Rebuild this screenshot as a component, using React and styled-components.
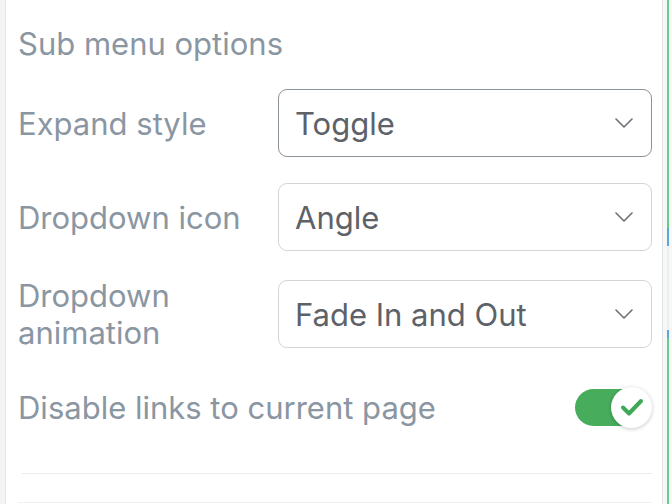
import React from "react";
import styled, { createGlobalStyle } from "styled-components";

const Global = createGlobalStyle`
  html, body { margin: 0; padding: 0; background: #ffffff; }
  body { font-family: Inter, "Noto Sans", sans-serif; }
  #root { width: 672px; height: 504px; overflow: hidden; }
`;

const Page = styled.div`
  display: flex;
  width: 672px;
  height: 504px;
  background: #fff;
`;

const LeftRail = styled.div`
  width: 5px;
  background: #f3f4f4;
  border-right: 1px solid #e6e7e8;
  flex: none;
`;

const RightRail = styled.div`
  width: 9px;
  flex: none;
  background: #f6f7f7;
  border-left: 1px solid #e3e4e5;
  display: flex;
  justify-content: flex-end;
`;

const Stripe = styled.div`
  width: 2px;
  margin-right: 3px;
  background: linear-gradient(
    to bottom,
    #6cc98a 0,
    #6cc98a 228px,
    #5aa7d8 228px,
    #5aa7d8 246px,
    #eceeef 246px,
    #eceeef 330px,
    #5aa7d8 330px,
    #5aa7d8 338px,
    #6cc98a 338px
  );
`;

const Panel = styled.div`
  flex: 1;
  padding: 25px 10px 0 12px;
  display: flex;
  flex-direction: column;
`;

const Heading = styled.div`
  font-size: 31px;
  line-height: 38px;
  color: #8a96a2;
  margin-bottom: 26px;
`;

const Row = styled.div`
  display: grid;
  grid-template-columns: 1fr 374px;
  align-items: center;
  margin-bottom: 26px;
`;

const Label = styled.div`
  font-size: 31px;
  line-height: 37px;
  color: #8a96a2;
  white-space: nowrap;
`;

const Select = styled.div`
  height: 68px;
  box-sizing: border-box;
  border: 1.5px solid ${(p) => (p.$focused ? "#8c9399" : "#d3d5d8")};
  border-radius: 9px;
  display: flex;
  align-items: center;
  justify-content: space-between;
  padding: 0 18px 0 16px;
  font-size: 31px;
  color: #5d6269;
  background: #fff;
`;

const SwitchRow = styled.div`
  display: flex;
  align-items: center;
  justify-content: space-between;
  margin-top: 8px;
  height: 44px;
`;

const Track = styled.div`
  position: relative;
  width: 66px;
  height: 37px;
  border-radius: 19px;
  background: #47ac5c;
  margin-right: 11px;
`;

const Knob = styled.div`
  position: absolute;
  right: -11px;
  top: -2px;
  width: 41px;
  height: 41px;
  border-radius: 50%;
  background: #fff;
  box-shadow: 0 1px 4px rgba(0, 0, 0, 0.22);
  display: flex;
  align-items: center;
  justify-content: center;
`;

const Divider = styled.div`
  height: 1px;
  background: #ececec;
  margin-top: 44px;
  margin-left: 4px;
`;

const BottomLine = styled.div`
  height: 1px;
  background: #f0f0f0;
  margin-top: 28px;
`;

const Chevron = () => (
  <svg width="18" height="10" viewBox="0 0 18 10" fill="none">
    <path d="M1 1l8 8 8-8" stroke="#6a6f75" strokeWidth="1.6" strokeLinecap="round" strokeLinejoin="round" />
  </svg>
);

const Check = () => (
  <svg width="24" height="20" viewBox="0 0 24 20" fill="none">
    <path d="M3 10.5l6 6L21 4" stroke="#3fa857" strokeWidth="4" strokeLinecap="round" strokeLinejoin="round" />
  </svg>
);

export default function App() {
  return (
    <Page>
      <Global />
      <LeftRail />
      <Panel>
        <Heading>Sub menu options</Heading>
        <Row>
          <Label>Expand style</Label>
          <Select $focused>
            Toggle
            <Chevron />
          </Select>
        </Row>
        <Row>
          <Label>Dropdown icon</Label>
          <Select>
            Angle
            <Chevron />
          </Select>
        </Row>
        <Row>
          <Label>
            Dropdown
            <br />
            animation
          </Label>
          <Select>
            Fade In and Out
            <Chevron />
          </Select>
        </Row>
        <SwitchRow>
          <Label>Disable links to current page</Label>
          <Track>
            <Knob>
              <Check />
            </Knob>
          </Track>
        </SwitchRow>
        <Divider />
        <BottomLine />
      </Panel>
      <RightRail>
        <Stripe />
      </RightRail>
    </Page>
  );
}
